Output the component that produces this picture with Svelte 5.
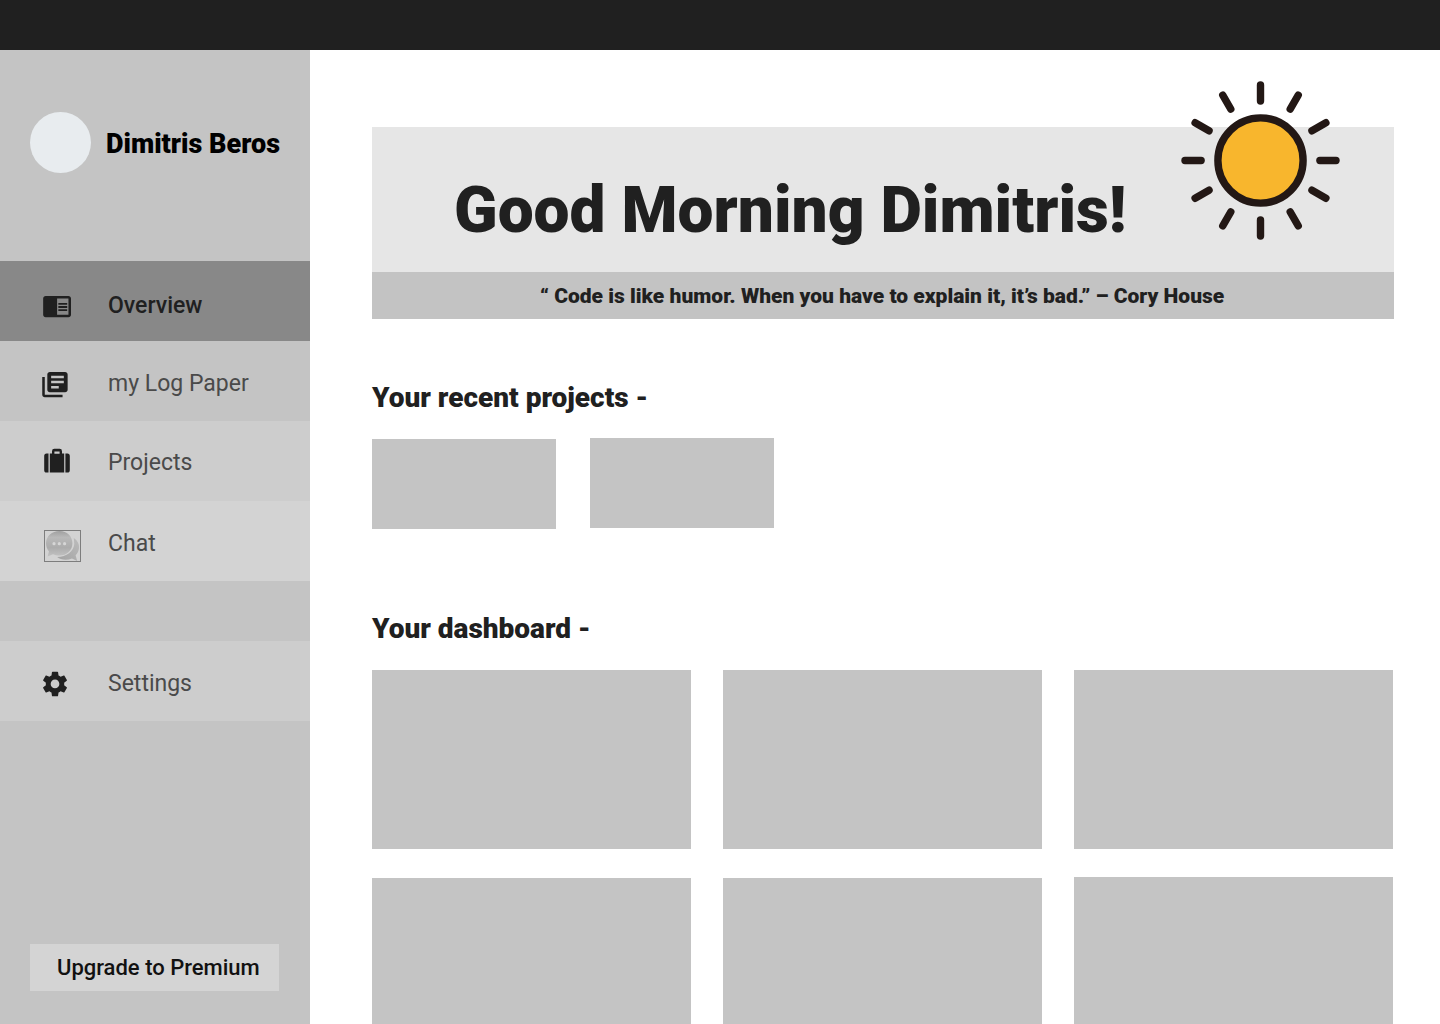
<script>
  const items = [
    { id: 'overview', label: 'Overview' },
    { id: 'log', label: 'my Log Paper' },
    { id: 'projects', label: 'Projects' },
    { id: 'chat', label: 'Chat' },
    { id: 'settings', label: 'Settings' }
  ];
  const recent = [1, 2];
  const panels = [1, 2, 3, 4, 5, 6];
  const rays = Array.from({ length: 12 }, (_, i) => i * 30);
</script>

<div class="page">
  <header class="topbar"></header>
  <div class="body">
    <aside class="sidebar">
      <div class="profile">
        <span class="avatar"></span>
        <span class="name">Dimitris Beros</span>
      </div>
      <nav>
        {#each items as item}
          <a class="item {item.id}">
            <svg class="icon" viewBox="0 0 108 80" width="108" height="80">
              {#if item.id === 'overview'}
                <path transform="translate(41.9 30) scale(1.265 1.255)" d="M13 12h7v1.5h-7zm0-2.5h7V11h-7zm0 5h7V16h-7zM21 4H3c-1.1 0-2 .9-2 2v13c0 1.1.9 2 2 2h18c1.1 0 2-.9 2-2V6c0-1.1-.9-2-2-2zm0 15h-9V6h9v13z" />
              {:else if item.id === 'log'}
                <path transform="translate(39.7 28.4) scale(1.27)" d="M4 6H2v14c0 1.1.9 2 2 2h14v-2H4V6zm16-4H8c-1.1 0-2 .9-2 2v12c0 1.1.9 2 2 2h12c1.1 0 2-.9 2-2V4c0-1.1-.9-2-2-2zm-1 9H9V9h10v2zm-4 4H9v-2h6v2zm4-8H9V5h10v2z" />
              {:else if item.id === 'projects'}
                <path d="M48.5 32.4V51.6H46.5Q44.2 51.6 44.2 49V35Q44.2 32.4 46.5 32.4ZM65.4 32.4H67.4Q69.8 32.4 69.8 35V49Q69.8 51.6 67.4 51.6H65.4ZM49.8 32.4H52V30.2Q52 27.8 54.4 27.8H59.6Q62 27.8 62 30.2V32.4H64.2V51.6H49.8ZM54.4 32.8H59.6V30.4H54.4Z" />
              {:else if item.id === 'chat'}
                <defs>
                  <linearGradient id="front" x1="0" y1="0" x2="0" y2="1">
                    <stop offset="0" stop-color="#a0a0a0" />
                    <stop offset="0.25" stop-color="#b9b9b9" />
                    <stop offset="0.65" stop-color="#acacac" />
                    <stop offset="1" stop-color="#c2c2c2" />
                  </linearGradient>
                  <linearGradient id="back" x1="1" y1="0" x2="0" y2="1">
                    <stop offset="0" stop-color="#bcbcbc" />
                    <stop offset="1" stop-color="#a2a2a2" />
                  </linearGradient>
                </defs>
                <path fill="url(#back)" d="M73.8 37C77.5 39.5 79.4 43 79 47C78.8 50 77.6 52.3 75.6 54.3L77.2 60L72 57.4C66.5 59.6 60.5 58.8 57.2 56C66.5 56 73.8 50 74.3 43Z" />
                <path fill="url(#front)" d="M59.5 30C67 30 72.4 35.3 72.4 42.3C72.4 49.5 66.7 54.6 59.5 54.6C57 54.6 55 54.1 53 53.2L47.6 55.6L49 50.5C47.2 48.5 46 45.5 46 42.3C46 35.3 52 30 59.5 30Z" />
                <g fill="#d6d6d6">
                  <circle cx="54" cy="42.7" r="1.6" />
                  <circle cx="59.3" cy="42.7" r="1.6" />
                  <circle cx="64.6" cy="42.7" r="1.6" />
                </g>
                <rect x="44.5" y="29.5" width="36" height="31" fill="none" stroke="#7d7d7d" />
              {:else}
                <path transform="translate(39.65 27.6) scale(1.28)" d="M19.14 12.94c.04-.3.06-.61.06-.94 0-.32-.02-.64-.07-.94l2.03-1.58c.18-.14.23-.41.12-.61l-1.92-3.32c-.12-.22-.37-.29-.59-.22l-2.39.96c-.5-.38-1.03-.7-1.62-.94l-.36-2.54c-.04-.24-.24-.41-.48-.41h-3.84c-.24 0-.43.17-.47.41l-.36 2.54c-.59.24-1.13.57-1.62.94l-2.39-.96c-.22-.08-.47 0-.59.22L2.74 8.87c-.12.21-.08.47.12.61l2.03 1.58c-.05.3-.09.63-.09.94s.02.64.07.94l-2.03 1.58c-.18.14-.23.41-.12.61l1.92 3.32c.12.22.37.29.59.22l2.39-.96c.5.38 1.03.7 1.62.94l.36 2.54c.05.24.24.41.48.41h3.84c.24 0 .44-.17.47-.41l.36-2.54c.59-.24 1.13-.56 1.62-.94l2.39.96c.22.08.47 0 .59-.22l1.92-3.32c.12-.22.07-.47-.12-.61l-2.01-1.58zM12 15.4c-1.88 0-3.4-1.52-3.4-3.4s1.52-3.4 3.4-3.4 3.4 1.52 3.4 3.4-1.52 3.4-3.4 3.4z" />
              {/if}
            </svg>
            <span class="label">{item.label}</span>
          </a>
        {/each}
      </nav>
      <button class="upgrade">Upgrade to Premium</button>
    </aside>

    <main>
      <section class="hero">
        <div class="greeting"><h1>Good Morning Dimitris!</h1></div>
        <p class="quote">“ Code is like humor. When you have to explain it, it’s bad.” – Cory House</p>
        <svg class="sun" viewBox="-80.5 -80.5 161 161" width="161" height="161">
          {#each rays as angle}
            <line x1="0" y1="-75.5" x2="0" y2="-59.4" transform="rotate({angle})" />
          {/each}
          <circle r="42.6" />
        </svg>
      </section>

      <h2>Your recent projects -</h2>
      <div class="recent">
        {#each recent as r}<div class="card"></div>{/each}
      </div>

      <h2 class="second">Your dashboard -</h2>
      <div class="dashboard">
        {#each panels as p}<div class="panel"></div>{/each}
      </div>
    </main>
  </div>
</div>

<style>
  :global(body) { margin: 0; background: #fff; }
  .page {
    display: flex;
    flex-direction: column;
    height: 1024px;
    overflow: hidden;
    font-family: Roboto, sans-serif;
    color: #202020;
  }
  .topbar { flex: none; height: 50px; background: #202020; }
  .body { flex: 1; display: flex; min-height: 0; }
  .sidebar {
    flex: none;
    display: flex;
    flex-direction: column;
    box-sizing: border-box;
    width: 310px;
    padding-bottom: 33px;
    background: #c4c4c4;
  }
  .profile {
    display: flex;
    align-items: center;
    gap: 15px;
    box-sizing: border-box;
    height: 211px;
    padding: 0 0 26px 30px;
  }
  .avatar { width: 61px; height: 61px; border-radius: 50%; background: #e8ecef; }
  .name { color: #000; font-size: 27px; font-weight: 900; line-height: 32px; white-space: nowrap; padding-top: 3px; }
  nav { display: flex; flex-direction: column; }
  .item {
    display: flex;
    box-sizing: border-box;
    height: 80px;
    font-size: 23px;
    line-height: 28px;
    color: #4a4a4a;
  }
  .icon { flex: none; fill: #202020; }
  .label { padding-top: 29px; white-space: nowrap; }
  .overview { background: #888; color: #202020; font-weight: 500; }
  .overview .label { padding-top: 31px; }
  .projects { background: #cdcdcd; }
  .projects .label { padding-top: 28px; }
  .chat { background: #d3d3d3; }
  .settings { margin-top: 60px; background: #cdcdcd; }
  .upgrade {
    width: 249px;
    height: 47px;
    margin: auto 0 0 30px;
    padding: 0 0 0 27px;
    border: 0;
    background: #d4d4d4;
    color: #111;
    font: 500 22px/47px Roboto, sans-serif;
    text-align: left;
    white-space: nowrap;
  }
  main { flex: 1; padding: 77px 46px 0 62px; }
  .hero { position: relative; width: 1022px; }
  .greeting { box-sizing: border-box; height: 145px; padding: 46px 0 0 82px; background: #e6e6e6; }
  h1 { margin: 0; font-size: 64px; line-height: 75px; font-weight: 900; white-space: nowrap; }
  .quote {
    margin: 0;
    height: 47px;
    padding-left: 168px;
    background: #c3c3c3;
    font-size: 21px;
    line-height: 49px;
    font-weight: 900;
    white-space: nowrap;
  }
  .sun { position: absolute; left: 808px; top: -47px; }
  .sun line { stroke: #231815; stroke-width: 7.4; stroke-linecap: round; }
  .sun circle { fill: #f8b62d; stroke: #231815; stroke-width: 7.4; }
  h2 { margin: 62px 0 0; font-size: 28px; line-height: 33px; font-weight: 900; }
  .recent { display: flex; gap: 34px; margin-top: 24px; height: 91px; }
  .card { width: 184px; height: 90px; background: #c4c4c4; }
  .card:first-child { margin-top: 1px; }
  h2.second { margin-top: 83px; }
  .dashboard {
    display: grid;
    grid-template-columns: repeat(3, 319px);
    grid-auto-rows: 179px;
    gap: 29px 32px;
    margin-top: 25px;
  }
  .panel { background: #c4c4c4; }
  .panel:last-child { margin-top: -1px; }
</style>
